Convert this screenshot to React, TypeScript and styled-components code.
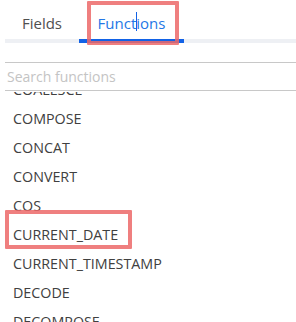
import React, { useLayoutEffect, useRef } from "react";
import styled, { createGlobalStyle } from "styled-components";

const GlobalStyle = createGlobalStyle`
  html, body {
    margin: 0;
    padding: 0;
    background: #ffffff;
    overflow: hidden;
  }
  body {
    font-family: "Open Sans", "Noto Sans", sans-serif;
  }
`;

const Panel = styled.div`
  width: 296px;
  height: 322px;
  display: flex;
  flex-direction: column;
  background: #ffffff;
`;

const TabRow = styled.div`
  display: flex;
  margin-left: 5px;
  box-shadow: inset 0 -4px 0 #eef0f4;
`;

const Tab = styled.div<{ $active?: boolean; $width: number }>`
  position: relative;
  width: ${(p) => p.$width}px;
  padding: 13px 0 6px;
  text-align: center;
  font-size: 15px;
  line-height: 20px;
  color: ${(p) => (p.$active ? "#2477e6" : "#4f4f4f")};
  border-bottom: 4px solid ${(p) => (p.$active ? "#1262e6" : "transparent")};
`;

const Caret = styled.span`
  position: absolute;
  left: 57px;
  top: 12px;
  width: 1px;
  height: 19px;
  background: #1262e6;
`;

const Highlight = styled.div<{ $left: number; $top: number; $w: number; $h: number }>`
  position: absolute;
  left: ${(p) => p.$left}px;
  top: ${(p) => p.$top}px;
  width: ${(p) => p.$w}px;
  height: ${(p) => p.$h}px;
  box-sizing: border-box;
  border: 4px solid rgba(236, 104, 104, 0.85);
  border-radius: 1px;
  pointer-events: none;
`;

const SearchInput = styled.input`
  display: block;
  box-sizing: border-box;
  margin: 19px 0 0 5px;
  width: 291px;
  height: 29px;
  padding: 0 2px;
  border: none;
  border-top: 1px solid #c8c8c8;
  border-bottom: 1px solid #c8c8c8;
  outline: none;
  font-family: "Open Sans", "Noto Sans", sans-serif;
  font-size: 14px;
  color: #333333;
  background: transparent;

  &::placeholder {
    color: #c4c4c4;
  }
`;

const FunctionList = styled.div`
  flex: 1;
  margin: 1px 0 0 5px;
  overflow-y: auto;
  scrollbar-width: none;

  &::-webkit-scrollbar {
    display: none;
  }
`;

const Item = styled.div`
  position: relative;
  height: 29px;
  padding-left: 8px;
  font-size: 14.3px;
  line-height: 29px;
  color: #404040;
  white-space: nowrap;
`;

const functions = [
  "COALESCE",
  "COMPOSE",
  "CONCAT",
  "CONVERT",
  "COS",
  "CURRENT_DATE",
  "CURRENT_TIMESTAMP",
  "DECODE",
  "DECOMPOSE",
  "DEGREES",
  "EXP",
];

export default function App() {
  const listRef = useRef<HTMLDivElement>(null);

  useLayoutEffect(() => {
    if (listRef.current) listRef.current.scrollTop = 17;
  }, []);

  return (
    <>
      <GlobalStyle />
      <Panel>
        <TabRow>
          <Tab $width={74}>Fields</Tab>
          <Tab $width={105} $active>
            Functions
            <Caret />
            <Highlight $left={8} $top={1} $w={92} $h={44} />
          </Tab>
        </TabRow>
        <SearchInput placeholder="Search functions" />
        <FunctionList ref={listRef}>
          {functions.map((name) => (
            <Item key={name}>
              {name}
              {name === "CURRENT_DATE" && (
                <Highlight $left={0} $top={-10} $w={127} $h={39} />
              )}
            </Item>
          ))}
        </FunctionList>
      </Panel>
    </>
  );
}
